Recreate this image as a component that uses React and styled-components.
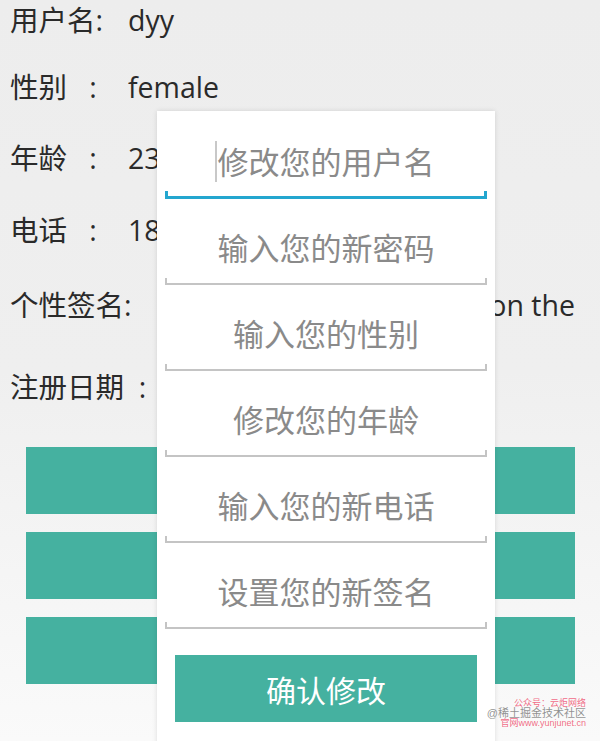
import React from 'react';
import styled, { createGlobalStyle } from 'styled-components';

const GlobalStyle = createGlobalStyle`
  html, body {
    margin: 0;
    padding: 0;
  }
  body {
    background: linear-gradient(to bottom, #ededed 0%, #efefef 50%, #fafafa 100%);
    font-family: "Open Sans", "Noto Sans CJK SC", sans-serif;
  }
`;

const Screen = styled.div`
  position: relative;
  width: 600px;
  height: 741px;
  overflow: hidden;
`;

const InfoList = styled.div`
  display: flex;
  flex-direction: column;
  padding-left: 10px;
`;

const InfoRow = styled.div`
  display: flex;
  align-items: center;
  height: 42px;
  margin-top: ${props => props.$top}px;
  font-size: 28.5px;
  line-height: 42px;
  color: #2a2a2a;
  white-space: nowrap;
`;

const Label = styled.span`
  width: ${props => props.$width || 118}px;
  flex-shrink: 0;
`;

const Value = styled.span`
  flex: 1;
  text-align: ${props => props.$right ? 'right' : 'left'};
  padding-right: ${props => props.$right ? 25 : 0}px;
`;

const ButtonStack = styled.div`
  display: flex;
  flex-direction: column;
  gap: 18px;
  margin: 39px 25px 0 26px;
`;

const MenuButton = styled.div`
  height: 67px;
  background: #45b1a0;
`;

const Dialog = styled.div`
  position: absolute;
  left: 157px;
  top: 111px;
  width: 338px;
  height: 640px;
  box-sizing: border-box;
  padding: 2px 8px 0;
  background: #ffffff;
  box-shadow: 0 0 5px rgba(0, 0, 0, 0.12);
  display: flex;
  flex-direction: column;
`;

const Field = styled.div`
  position: relative;
  height: 86px;
  display: flex;
  align-items: flex-end;
  justify-content: center;
  padding-bottom: 18px;
  box-sizing: border-box;

  &::after {
    content: '';
    position: absolute;
    left: 0;
    right: 0;
    bottom: 0;
    height: 5px;
    border: ${props => props.$focused ? '3px' : '2px'} solid ${props => props.$focused ? '#23a6cf' : '#c4c4c4'};
    border-top: none;
  }
`;

const Hint = styled.span`
  position: relative;
  font-size: 31px;
  line-height: 38px;
  color: #8a8a8a;
`;

const Cursor = styled.span`
  position: absolute;
  left: -3px;
  top: -2px;
  width: 2px;
  height: 41px;
  background: #c8c8c8;
`;

const ConfirmButton = styled.div`
  margin: 26px 10px 0;
  height: 67px;
  background: #45b1a0;
  color: #ffffff;
  font-size: 30px;
  display: flex;
  align-items: center;
  justify-content: center;
`;

const Watermark = styled.div`
  position: absolute;
  right: 14px;
  bottom: 13px;
  display: flex;
  flex-direction: column;
  align-items: flex-end;
  font-family: "Liberation Sans", "Noto Sans CJK SC", sans-serif;
  line-height: 10px;
`;

const MarkLine = styled.span`
  color: ${props => props.$grey ? 'rgba(110, 110, 110, 0.75)' : 'rgba(240, 90, 120, 0.9)'};
  font-size: ${props => props.$grey ? 11 : 9}px;
`;

const fields = [
  { hint: '修改您的用户名', focused: true },
  { hint: '输入您的新密码' },
  { hint: '输入您的性别' },
  { hint: '修改您的年龄' },
  { hint: '输入您的新电话' },
  { hint: '设置您的新签名' },
];

const App = () => (
  <Screen>
    <GlobalStyle />
    <InfoList>
      <InfoRow $top={-1}>
        <Label>用户名:</Label>
        <Value>dyy</Value>
      </InfoRow>
      <InfoRow $top={25}>
        <Label>性别&nbsp;&nbsp;&nbsp;:</Label>
        <Value>female</Value>
      </InfoRow>
      <InfoRow $top={29}>
        <Label>年龄&nbsp;&nbsp;&nbsp;:</Label>
        <Value>23</Value>
      </InfoRow>
      <InfoRow $top={30}>
        <Label>电话&nbsp;&nbsp;&nbsp;:</Label>
        <Value>18</Value>
      </InfoRow>
      <InfoRow $top={33}>
        <Label $width={128}>个性签名:</Label>
        <Value $right>on the</Value>
      </InfoRow>
      <InfoRow $top={40}>
        <Label $width={160}>注册日期&nbsp;&nbsp;:</Label>
        <Value />
      </InfoRow>
    </InfoList>
    <ButtonStack>
      <MenuButton />
      <MenuButton />
      <MenuButton />
    </ButtonStack>
    <Dialog>
      {fields.map(f => (
        <Field key={f.hint} $focused={f.focused}>
          <Hint>
            {f.focused && <Cursor />}
            {f.hint}
          </Hint>
        </Field>
      ))}
      <ConfirmButton>确认修改</ConfirmButton>
    </Dialog>
    <Watermark>
      <MarkLine>公众号：云炬网络</MarkLine>
      <MarkLine $grey>@稀土掘金技术社区</MarkLine>
      <MarkLine>官网www.yunjunet.cn</MarkLine>
    </Watermark>
  </Screen>
);

export default App;
